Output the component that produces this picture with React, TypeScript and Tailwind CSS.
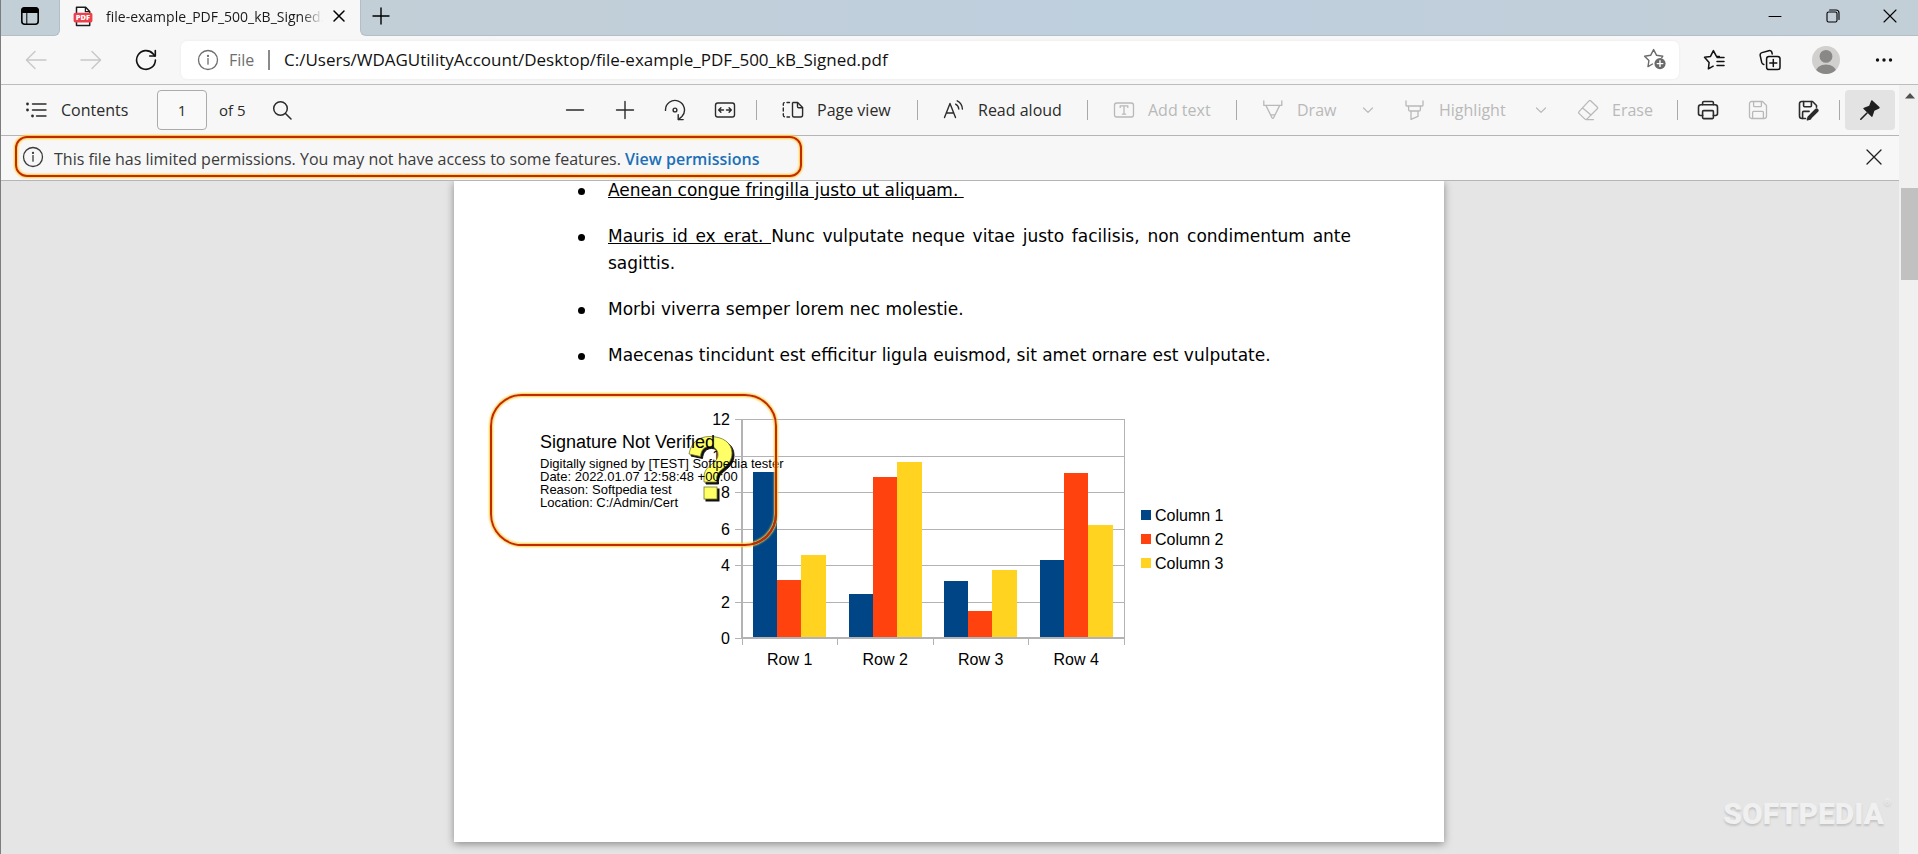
import React from "react";

type IconProps = {
  size?: number;
  className?: string;
  strokeWidth?: number;
  children: React.ReactNode;
};

function Icon({ size = 22, className = "", strokeWidth = 1.4, children }: IconProps) {
  return (
    <svg
      width={size}
      height={size}
      viewBox={`0 0 ${size} ${size}`}
      fill="none"
      stroke="currentColor"
      strokeWidth={strokeWidth}
      strokeLinecap="round"
      strokeLinejoin="round"
      className={`shrink-0 ${className}`}
      aria-hidden="true"
    >
      {children}
    </svg>
  );
}

const InfoIcon = () => (
  <Icon strokeWidth={1.3}>
    <circle cx="11" cy="11" r="9.5" />
    <path d="M11 9.6v5.6" />
    <circle cx="11" cy="6.9" r="0.5" fill="currentColor" />
  </Icon>
);

type SeriesKey = "a" | "b" | "c";

const SERIES: { key: SeriesKey; name: string; color: string }[] = [
  { key: "a", name: "Column 1", color: "#004586" },
  { key: "b", name: "Column 2", color: "#ff420e" },
  { key: "c", name: "Column 3", color: "#ffd320" },
];

const ROWS: { label: string; a: number; b: number; c: number }[] = [
  { label: "Row 1", a: 9.1, b: 3.2, c: 4.54 },
  { label: "Row 2", a: 2.4, b: 8.8, c: 9.65 },
  { label: "Row 3", a: 3.1, b: 1.5, c: 3.7 },
  { label: "Row 4", a: 4.3, b: 9.02, c: 6.2 },
];

const TICKS = [0, 2, 4, 6, 8, 10, 12];

const PLOT = { left: 52, top: 19, width: 382, height: 219 };

function BarChart() {
  const bottom = PLOT.top + PLOT.height;
  const right = PLOT.left + PLOT.width;
  const group = PLOT.width / ROWS.length;
  const y = (v: number) => Math.round(bottom - (v / 12) * PLOT.height);

  return (
    <svg
      width="550"
      height="280"
      viewBox="0 0 550 280"
      className="block font-['Liberation_Sans',sans-serif] text-[16px]"
      role="img"
      aria-label="Bar chart"
    >
      <g stroke="#b3b3b3" strokeWidth="1" shapeRendering="crispEdges">
        {TICKS.map((t) => (
          <line key={t} x1={PLOT.left - 7} x2={right} y1={y(t)} y2={y(t)} />
        ))}
        <line x1={right} x2={right} y1={PLOT.top} y2={bottom} />
        <line x1={PLOT.left} x2={PLOT.left} y1={PLOT.top} y2={bottom} strokeWidth="2" />
        {[0, 1, 2, 3, 4].map((i) => (
          <line key={i} x1={PLOT.left + i * group} x2={PLOT.left + i * group} y1={bottom} y2={bottom + 7} />
        ))}
      </g>
      {ROWS.map((row, i) =>
        SERIES.map((s, j) => (
          <rect
            key={`${row.label}-${s.key}`}
            x={Math.round(PLOT.left + i * group + 11 + j * 24)}
            y={y(row[s.key])}
            width={j === 2 ? 25 : 24}
            height={bottom - y(row[s.key])}
            fill={s.color}
          />
        ))
      )}
      <line x1={PLOT.left} x2={right} y1={bottom} y2={bottom} stroke="#b3b3b3" strokeWidth="2" />
      {TICKS.map((t) => (
        <text key={t} x="40" y={y(t) + 6} textAnchor="end">
          {t}
        </text>
      ))}
      {ROWS.map((row, i) => (
        <text key={row.label} x={PLOT.left + (i + 0.5) * group} y="265" textAnchor="middle">
          {row.label}
        </text>
      ))}
      {SERIES.map((s, i) => (
        <g key={s.name}>
          <rect x="451" y={110 + i * 24} width="10" height="10" fill={s.color} />
          <text x="465" y={121 + i * 24}>
            {s.name}
          </text>
        </g>
      ))}
    </svg>
  );
}

function TitleBar() {
  return (
    <div className="flex h-9 bg-[#f7f7f7]">
      <div className="flex w-[59px] shrink-0 items-start justify-center rounded-br-md border-r border-b border-[#b3bec5] bg-[#c3cfd7]">
        <button type="button" aria-label="Tab actions" className="flex h-8 w-8 items-center justify-center text-black">
          <Icon size={20} strokeWidth={1.6}>
            <rect x="1.8" y="1.8" width="16.4" height="16.4" rx="3" />
            <path d="M2 4.5C2 3 3 2 4.5 2h11C17 2 18 3 18 4.5V6.2H2z" fill="currentColor" />
            <path d="M6.8 6v12" strokeWidth="1" />
          </Icon>
        </button>
      </div>

      <div className="flex h-8 w-[300px] shrink-0 items-center pl-3">
        <svg width="22" height="22" viewBox="0 0 22 22" aria-hidden="true" className="shrink-0">
          <path d="M4.5 2.2h9.2l4 4.2v14H4.5z" fill="#fff" stroke="#1c1c1c" strokeWidth="1.5" strokeLinejoin="round" />
          <path d="M13.4 2.4v4.3h4.2" fill="none" stroke="#1c1c1c" strokeWidth="1.3" />
          <rect x="1.6" y="7.8" width="18.8" height="9.6" rx="1.6" fill="#ee404c" />
          <text x="11" y="15.4" textAnchor="middle" fontSize="7.5" fontWeight="800" fill="#fff" fontFamily="Open Sans">
            PDF
          </text>
        </svg>
        <span className="ml-3 w-[217px] overflow-hidden mask-r-from-90% text-[14px] whitespace-nowrap text-[#1a1a1a]">
          file-example_PDF_500_kB_Signed.pdf
        </span>
        <button type="button" aria-label="Close tab" className="ml-1 flex h-6 w-6 items-center justify-center">
          <Icon size={14} strokeWidth={1.5}>
            <path d="M2 2l10 10M12 2 2 12" />
          </Icon>
        </button>
      </div>

      <div className="flex flex-1 justify-between rounded-bl-md border-b border-l border-[#b3bec5] bg-linear-to-r from-[#c3cfd7] via-[#becfde] to-[#c3cfd7] text-black">
        <button type="button" aria-label="New tab" className="flex h-8 w-10 items-center justify-center">
          <Icon size={18} strokeWidth={1.4}>
            <path d="M9 1v16M1 9h16" />
          </Icon>
        </button>
        <div className="flex">
          <button type="button" aria-label="Minimize" className="flex h-8 w-[58px] items-center justify-center">
            <Icon size={14} strokeWidth={1}>
              <path d="M1 7.5h12" />
            </Icon>
          </button>
          <button type="button" aria-label="Restore" className="flex h-8 w-[58px] items-center justify-center">
            <Icon size={14} strokeWidth={1.1}>
              <rect x="1" y="3" width="10" height="10" rx="1.6" />
              <path d="M3.6 1h6.4a3 3 0 0 1 3 3v6.4" />
            </Icon>
          </button>
          <button type="button" aria-label="Close" className="flex h-8 w-[56px] items-center justify-center">
            <Icon size={14} strokeWidth={1.1}>
              <path d="M1 1l12 12M13 1 1 13" />
            </Icon>
          </button>
        </div>
      </div>
    </div>
  );
}

function AddressBar() {
  return (
    <div className="flex h-[49px] items-center border-b border-[#bdbdbd] bg-[#f7f7f7] pr-1 pl-[7px]">
      <button type="button" disabled aria-label="Back" className="flex h-9 w-[55px] items-center justify-center text-[#c8c8c8]">
        <Icon>
          <path d="M21 11H1.6M10 2.4 1.4 11l8.6 8.6" />
        </Icon>
      </button>
      <button type="button" disabled aria-label="Forward" className="flex h-9 w-[55px] items-center justify-center text-[#c8c8c8]">
        <Icon>
          <path d="M1 11h19.4M12 2.4l8.6 8.6-8.6 8.6" />
        </Icon>
      </button>
      <button type="button" aria-label="Refresh" className="flex h-9 w-[55px] items-center justify-center text-[#111]">
        <Icon strokeWidth={1.6}>
          <path d="M20.4 11A9.4 9.4 0 1 1 17.9 4.6L20 7" />
          <path d="M20.3 1.6V7h-5.6" />
        </Icon>
      </button>

      <div className="ml-2 flex h-[38px] flex-1 items-center rounded-md bg-white pr-3 pl-4 shadow-[0_0_3px_rgba(0,0,0,0.06)]">
        <span className="flex text-[#6e6e6e]">
          <InfoIcon />
        </span>
        <label htmlFor="url" className="ml-[10px] w-[41px] border-r-2 border-[#8a8a8a] text-[16px] leading-5 text-[#6e6e6e]">
          File
        </label>
        <input
          id="url"
          type="text"
          defaultValue="C:/Users/WDAGUtilityAccount/Desktop/file-example_PDF_500_kB_Signed.pdf"
          className="ml-[14px] min-w-0 flex-1 bg-transparent text-[17px] text-[#111] outline-none"
        />
        <button type="button" aria-label="Add to favorites" className="text-[#6a6a6a]">
          <Icon size={24}>
            <path d="M9.500 16 5 18.600l.9-6.100L1.600 8.200l6-.9L10.600 1.600l3 5.700 6.200.9-1 1.400" />
            <circle cx="17" cy="15.6" r="5.6" fill="currentColor" stroke="none" />
            <path d="M17 12.8v5.6M14.2 15.6h5.6" stroke="#fff" />
          </Icon>
        </button>
      </div>

      <div className="ml-[7px] flex text-[#111]">
        <button type="button" aria-label="Favorites" className="flex h-9 w-14 items-center justify-center">
          <Icon strokeWidth={1.5}>
            <path d="M10.200 17.200 5.400 19.800l.7-6.300L1.500 8.300l6-.9L10.400 1.600l2.900 5.600 3 .4" />
            <path d="M14 8.400h7M14 12.400h7M14 16.400h7" />
          </Icon>
        </button>
        <button type="button" aria-label="Collections" className="flex h-9 w-14 items-center justify-center">
          <Icon strokeWidth={1.5}>
            <rect x="7.6" y="7.4" width="13.4" height="13.2" rx="2.4" />
            <path d="M14.3 10.6v7M10.8 14h7" />
            <path d="M4.8 15.6c-1.2-.3-1.8-1-2.1-2.2L1.2 6.6C.9 5 1.6 4 3 3.6l6.800-1.900c1.600-.4 2.700.2 3.100 1.800l.3 1.400" />
          </Icon>
        </button>
        <button type="button" aria-label="Profile" className="flex h-9 w-14 items-center justify-center">
          <svg width="28" height="28" viewBox="0 0 28 28" aria-hidden="true">
            <clipPath id="avatar">
              <circle cx="14" cy="14" r="14" />
            </clipPath>
            <g clipPath="url(#avatar)">
              <rect width="28" height="28" fill="#d2d0ce" />
              <circle cx="14" cy="10.400" r="6.400" fill="#8a8886" />
              <ellipse cx="14" cy="26" rx="10.400" ry="7.600" fill="#8a8886" />
            </g>
          </svg>
        </button>
        <button type="button" aria-label="Settings and more" className="flex h-9 w-[60px] items-center justify-center">
          <Icon size={18}>
            <g fill="currentColor" stroke="none">
              <circle cx="2.500" cy="9" r="1.700" />
              <circle cx="9" cy="9" r="1.700" />
              <circle cx="15.500" cy="9" r="1.700" />
            </g>
          </Icon>
        </button>
      </div>
    </div>
  );
}

type ToolProps = {
  label: string;
  className: string;
  disabled?: boolean;
  children: React.ReactNode;
};

function LabelTool({ label, className, disabled, children }: ToolProps) {
  return (
    <button
      type="button"
      disabled={disabled}
      className={`flex h-10 shrink-0 items-center gap-[13px] pl-5 text-[16px] whitespace-nowrap disabled:text-[#b9b9b9] ${className}`}
    >
      {children}
      {label}
    </button>
  );
}

function IconTool({ label, className, disabled, children }: ToolProps) {
  return (
    <button
      type="button"
      aria-label={label}
      disabled={disabled}
      className={`flex h-10 shrink-0 items-center justify-center disabled:text-[#b9b9b9] ${className}`}
    >
      {children}
    </button>
  );
}

const Divider = () => (
  <span className="flex w-3 shrink-0 justify-center">
    <span className="h-5 w-px bg-[#a9a9a9]" />
  </span>
);

const Chevron = () => (
  <Icon size={12} strokeWidth={1.2}>
    <path d="M1.500 4 6 8.400 10.500 4" />
  </Icon>
);

const Floppy = ({ edit = false }: { edit?: boolean }) => (
  <Icon strokeWidth={edit ? 1.6 : 1.3}>
    <path
      d={
        edit
          ? "M8.500 19.500H5a2.500 2.500 0 0 1-2.500-2.500V4.500a2 2 0 0 1 2-2h11l4 4v1.700"
          : "M4.500 2.500h11l4 4V17a2.500 2.500 0 0 1-2.500 2.500H4.500a2 2 0 0 1-2-2v-13a2 2 0 0 1 2-2z"
      }
    />
    <path d="M6.600 2.600v4.200c0 .6.300.9.900.9h6c.600 0 .900-.3.900-.9V2.600" />
    {edit ? (
      <>
        <path d="M5.600 19.400v-6c0-.6.300-1 .9-1h5.600" />
        <path d="M12.600 18.400 19 12l.6-.6" strokeWidth="4" />
        <path d="m10.400 20.800 1.200-3 2 2z" fill="currentColor" />
      </>
    ) : (
      <path d="M5.600 19.400v-6c0-.6.300-1 .9-1h9c.600 0 .900.400.900 1v6" />
    )}
  </Icon>
);

function PdfToolbar() {
  return (
    <div className="flex h-[51px] items-center border-b border-[#b5b5b5] bg-[#f7f7f7] pr-1 text-[#2b2b2b]">
      <button type="button" className="flex h-10 items-center gap-[14px] pl-6 text-[16px]">
        <Icon>
          <path d="M7.500 5h13.500M7.500 11h13.500M11.500 17H21" />
          <g fill="currentColor" stroke="none">
            <circle cx="2.500" cy="5" r="1.400" />
            <circle cx="2.500" cy="11" r="1.400" />
            <circle cx="7.500" cy="17" r="1.400" />
          </g>
        </Icon>
        <span className="w-[72px] text-left">Contents</span>
      </button>
      <label className="ml-6 flex items-center gap-3 text-[15px]">
        <input
          type="text"
          defaultValue="1"
          className="h-10 w-[50px] rounded-sm border border-[#ababab] bg-[#f9f9f9] text-center text-[15px] outline-none"
        />
        of 5
      </label>
      <button type="button" aria-label="Find" className="ml-4 flex h-10 w-10 items-center justify-center">
        <Icon size={20} strokeWidth={1.500}>
          <circle cx="8.500" cy="8.500" r="6.800" />
          <path d="m13.500 13.500 5.500 5.500" />
        </Icon>
      </button>

      <div className="ml-auto flex items-center">
        <IconTool label="Zoom out" className="w-[50px]">
          <Icon size={20}>
            <path d="M1.500 10h17" />
          </Icon>
        </IconTool>
        <IconTool label="Zoom in" className="w-[50px]">
          <Icon size={20}>
            <path d="M1.500 10h17M10 1.500v17" />
          </Icon>
        </IconTool>
        <IconTool label="Rotate" className="w-[50px]">
          <Icon>
            <path d="M1.500 11.400a9.500 9.500 0 1 1 16.400 6.100L14.600 20.400" />
            <path d="M14.200 15.600v5h5" />
            <circle cx="11" cy="11" r="1.900" />
          </Icon>
        </IconTool>
        <IconTool label="Fit to width" className="w-[50px]">
          <Icon>
            <rect x="1.500" y="4" width="19" height="14" rx="2.200" />
            <path d="M9.500 11H4.800M6.900 8.800 4.700 11l2.200 2.200M12.500 11h4.700M15.100 8.800l2.200 2.200-2.200 2.200" />
          </Icon>
        </IconTool>
        <Divider />
        <LabelTool label="Page view" className="w-[149px]">
          <Icon>
            <path d="M11 3.500h4.600l5 5V16a2 2 0 0 1-2 2H12a1.500 1.500 0 0 1-1.500-1.500V4" />
            <path d="M15.500 3.700v3.800c0 .8.400 1.200 1.200 1.200h3.800" />
            <path d="M7.500 3.500H5M2.200 3.600c-.5.200-.9.700-.9 1.400v1.200M1.300 9v3M1.300 14.800V16c0 .9.400 1.500 1.100 1.800M5 18h2.500" />
          </Icon>
        </LabelTool>
        <Divider />
        <LabelTool label="Read aloud" className="w-[158px]">
          <Icon>
            <path d="M1.500 18.500 7 4.500l5.500 14M3.200 14h7.600" />
            <path d="M12.600 5.200c1.900 1 3 2.600 3.200 4.800M14.200 1.800c3.200 1.600 5 4.400 5.200 8.200" />
          </Icon>
        </LabelTool>
        <Divider />
        <LabelTool label="Add text" className="w-[137px]" disabled>
          <Icon strokeWidth={1.300}>
            <rect x="1.500" y="4" width="19" height="14" rx="2.200" />
            <path d="M7.200 8.400V6.800h7.600v1.600M11 6.800v8.200M9.400 15.200h3.200" />
          </Icon>
        </LabelTool>
        <Divider />
        <LabelTool label="Draw" className="w-[110px]" disabled>
          <Icon strokeWidth={1.300}>
            <path d="M1.800 1.800v4.600h18V1.800M4 6.600l6 12.200c.4.800 1.200.8 1.600 0l6-12.200M8.800 15.800h4" />
          </Icon>
        </LabelTool>
        <IconTool label="Draw options" className="w-8" disabled>
          <Chevron />
        </IconTool>
        <LabelTool label="Highlight" className="w-[141px]" disabled>
          <Icon strokeWidth={1.300}>
            <path d="M2 1.800v4.400c0 .5.300.8.800.8h15.400c.5 0 .8-.3.800-.8V1.800M4.600 7.200v3.200c0 1 .6 1.600 1.600 1.600h8.600c1 0 1.600-.6 1.600-1.600V7.200M7 12.200v8.200l7-3v-5.200" />
          </Icon>
        </LabelTool>
        <IconTool label="Highlight options" className="w-8" disabled>
          <Chevron />
        </IconTool>
        <LabelTool label="Erase" className="w-[114px]" disabled>
          <Icon strokeWidth={1.300}>
            <path d="M13.600 1.800 20.200 8c.6.600.6 1.200 0 1.800L10.400 19.600c-.9.900-2.100.9-3 0L2 14.400c-.6-.6-.6-1.200 0-1.800L12 1.900c.5-.5 1.100-.5 1.600-.1zM5.600 9l8.400 7M9 20.600h7.500" />
          </Icon>
        </LabelTool>
        <Divider />
        <IconTool label="Print" className="w-[50px]">
          <Icon strokeWidth={1.600}>
            <path d="M5.600 5.600V3.800c0-.8.500-1.300 1.300-1.300h8.200c.8 0 1.300.5 1.300 1.300v1.800" />
            <path d="M5.600 16.500H3.400c-1.100 0-1.900-.8-1.900-1.900V8.200c0-1.500 1-2.500 2.500-2.500h14c1.500 0 2.500 1 2.500 2.500v6.400c0 1.100-.8 1.900-1.900 1.900h-2.200" />
            <rect x="5.600" y="11.600" width="10.800" height="8" rx="1" />
          </Icon>
        </IconTool>
        <IconTool label="Save" className="w-[50px]" disabled>
          <Floppy />
        </IconTool>
        <IconTool label="Save as" className="w-[50px]">
          <Floppy edit />
        </IconTool>
        <Divider />
        <IconTool label="Pin toolbar" className="w-[50px] rounded-sm bg-[#e3e3e3] text-[#1f1f1f]">
          <Icon>
            <path
              d="M13.400 1.600 20.400 8c.5.500.4 1.100-.2 1.400l-4.800 2.400-1.800 5.400c-.2.700-.8.900-1.300.4L4.600 10c-.5-.5-.3-1.100.4-1.300l5.200-1.900 1.800-4.900c.2-.7.900-.8 1.400-.3z"
              fill="currentColor"
              stroke="none"
            />
            <path d="M8 14 1.800 20.200" strokeWidth="1.600" />
          </Icon>
        </IconTool>
      </div>
    </div>
  );
}

const callout =
  "border-2 border-[#c42a00] shadow-[0_0_2px_1px_#ffcf3a,inset_0_0_2px_1px_#ffcf3a]";

function PermissionBar() {
  return (
    <div className="flex h-[45px] items-start justify-between border-b border-[#b5b5b5] bg-[#f7f7f7] text-[#3b3b3b]">
      <div className={`ml-[14px] flex h-[41px] items-center rounded-xl pr-10 pl-[5px] ${callout}`}>
        <InfoIcon />
        <p className="ml-[10px] pt-1 text-[16px] whitespace-nowrap">
          This file has limited permissions. You may not have access to some features.{" "}
          <a href="#permissions" className="font-semibold text-[#1b6fb8]">
            View permissions
          </a>
        </p>
      </div>
      <button type="button" aria-label="Dismiss" className="mr-[5px] flex h-[42px] w-10 items-center justify-center text-[#1f1f1f]">
        <Icon size={16} strokeWidth={1.300}>
          <path d="M1 1l14 14M15 1 1 15" />
        </Icon>
      </button>
    </div>
  );
}

const MARK =
  "M1 19C3 8 10 1.500 22 1.500c13 0 22 6.500 22 16.500 0 7-3.500 11-9 15.500-5 4-6.500 6.500-6.500 11V47H16v-4.500C16 36 19 33 24 29c4-3.200 6-5.500 6-9.500 0-4.500-3.500-8-8.500-8s-8.500 3.500-9 10z";

function SignatureStamp() {
  return (
    <div className="absolute top-[-6px] left-[36px] h-[152px] w-[287px] font-['Liberation_Sans',sans-serif] text-black">
      <svg width="48" height="70" viewBox="0 0 48 70" aria-hidden="true" className="absolute top-[41px] left-[198px]">
        <g fill="#111" stroke="#111" transform="translate(2 2)">
          <path d={MARK} />
          <rect x="16" y="52" width="13" height="12" />
        </g>
        <g fill="#ffff66" stroke="#77772f" strokeWidth="0.800">
          <path d={MARK} />
          <rect x="16" y="52" width="13" height="12" />
        </g>
      </svg>
      <div className="relative pt-9 pl-[50px] whitespace-nowrap">
        <p className="text-[18px] leading-6">Signature Not Verified</p>
        <div className="mt-[3px] text-[13px] leading-[13px]">
          <p>Digitally signed by [TEST] Softpedia tester</p>
          <p>Date: 2022.01.07 12:58:48 +00:00</p>
          <p>Reason: Softpedia test</p>
          <p>Location: C:/Admin/Cert</p>
        </div>
      </div>
      <div className={`absolute inset-0 rounded-4xl ${callout}`} />
    </div>
  );
}

function Bullet({ children }: { children: React.ReactNode }) {
  return (
    <li className="flex gap-[23px] before:mt-[11px] before:size-[7px] before:shrink-0 before:rounded-full before:bg-black">
      <p className="flex-1 text-justify">{children}</p>
    </li>
  );
}

function PdfPage() {
  return (
    <article className="mb-3 w-[990px] max-w-full bg-white pb-[162px] text-black shadow-[0_2px_8px_rgba(0,0,0,0.4)]">
      <ul className="-mt-1 flex flex-col gap-[19px] pr-[93px] pl-[124px] font-['DejaVu_Sans',sans-serif] text-[17px] leading-[27px]">
        <Bullet>
          <u className="whitespace-pre">Aenean congue fringilla justo ut aliquam. </u>
        </Bullet>
        <Bullet>
          <u>Mauris id ex erat. </u>Nunc vulputate neque vitae justo facilisis, non condimentum ante sagittis.
        </Bullet>
        <Bullet>Morbi viverra semper lorem nec molestie.</Bullet>
        <Bullet>Maecenas tincidunt est efficitur ligula euismod, sit amet ornare est vulputate.</Bullet>
      </ul>
      <div className="relative mt-[31px] pl-[236px]">
        <BarChart />
        <SignatureStamp />
      </div>
    </article>
  );
}

function Scrollbar() {
  return (
    <div className="flex w-[19px] shrink-0 flex-col items-end bg-[#f0f0f0]" aria-hidden="true">
      <div className="flex h-[103px] w-[17px] justify-center pt-2">
        <svg width="10" height="6" viewBox="0 0 10 6">
          <path d="M5 0l5 5.500H0z" fill="#505050" />
        </svg>
      </div>
      <div className="h-[92px] w-[17px] bg-[#c1c1c1]" />
    </div>
  );
}

export default function App() {
  return (
    <div className="flex min-h-screen flex-col border-l border-[#7d7d7d] bg-[#e5e5e5] font-['Open_Sans',sans-serif]">
      <TitleBar />
      <AddressBar />
      <div className="flex flex-1">
        <div className="relative flex min-w-0 flex-1 flex-col">
          <PdfToolbar />
          <PermissionBar />
          <main className="flex flex-1 items-start justify-center overflow-hidden pr-[2px]">
            <PdfPage />
          </main>
          <div className="absolute right-2 bottom-4 flex items-start font-['Roboto',sans-serif] font-black text-[#f0f0f0] [text-shadow:0_2px_2px_#c4c4c4]">
            <span className="text-[30px] leading-12">SOFTPEDIA</span>
            <span className="pt-1 text-[9px] leading-4">®</span>
          </div>
        </div>
        <Scrollbar />
      </div>
    </div>
  );
}
